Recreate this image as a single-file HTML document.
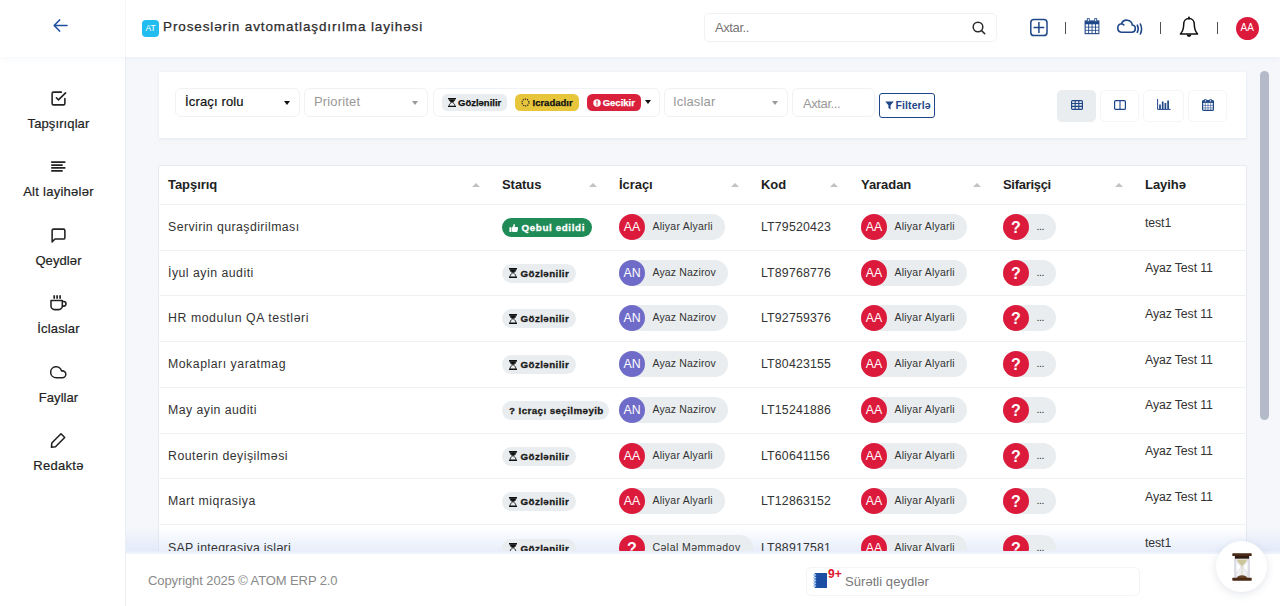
<!DOCTYPE html>
<html lang="az">
<head>
<meta charset="utf-8">
<title>Proseslərin avtomatlaşdırılma layihəsi</title>
<style>
*{box-sizing:border-box;margin:0;padding:0}
html,body{width:1280px;height:606px;overflow:hidden}
body{font-family:"Liberation Sans",sans-serif;background:#f5f7fb;color:#212529;position:relative;font-size:13px}
.abs{position:absolute}
/* sidebar */
#side{position:absolute;left:0;top:0;width:126px;height:606px;background:#fff;border-right:1px solid #ebeef3;z-index:5}
.nav{position:absolute;left:0;width:117px;text-align:center;font-size:13px;color:#222;font-weight:400;letter-spacing:.35px;-webkit-text-stroke:.2px}
.nav svg{display:block;margin:0 auto}
/* header */
#head{position:absolute;left:0;top:0;width:1280px;height:56.500px;background:#fff;box-shadow:0 1px 7px rgba(195,204,222,.2);z-index:6}
#sidehead{position:absolute;left:125px;top:0;width:1px;height:57px;background:#f6f7fa;z-index:7}
#title{position:absolute;left:163px;top:18.7px;-webkit-text-stroke:.25px;font-size:13.5px;color:#2c2c2c;letter-spacing:.88px;white-space:nowrap;z-index:7}
#at{position:absolute;left:142px;top:20px;width:17px;height:17px;border-radius:4px;background:#22bdf0;color:#fff;font-size:8.500px;line-height:17px;text-align:center;z-index:7}
#search{position:absolute;left:704px;top:13px;width:293px;height:29px;border:1px solid #f1f2f6;border-radius:5px;background:#fff;z-index:7}
#search span{position:absolute;left:10px;top:6px;font-size:13px;color:#777;letter-spacing:-.4px}
.sep{position:absolute;top:22px;width:1.3px;height:12px;background:#505050;z-index:7}
/* cards */
.card{position:absolute;background:#fff;border-radius:2px;z-index:0}
.sel{position:absolute;top:88px;height:28.5px;border:1px solid #f1f2f6;border-radius:6px;background:#fff;font-size:13px;white-space:nowrap}
.sel span{position:absolute;left:9px;top:5px;letter-spacing:.15px}
.sel i{position:absolute;right:9px;top:12px;border-left:3.5px solid transparent;border-right:3.5px solid transparent;border-top:4px solid #999}
.ph{color:#999}
.bdg{position:absolute;height:16.5px;-webkit-text-stroke:.25px;border-radius:5.5px;font-size:9.5px;font-weight:700;line-height:17px;white-space:nowrap;color:#111;padding:0 5px}
.vb{position:absolute;top:89.500px;width:39px;height:32px;border:1px solid #f4f5f8;border-radius:5px;background:#fff}
/* table */
.th{position:absolute;top:177px;font-size:13px;font-weight:700;color:#222;letter-spacing:-.05px;white-space:nowrap}
.sa{position:absolute;top:182.5px;border-left:4px solid transparent;border-right:4px solid transparent;border-bottom:4.5px solid #c2c2c2}
.row{position:absolute;left:158px;width:1089px;height:46px;border-top:1px solid #eff1f4;z-index:2}
.c{position:absolute;white-space:nowrap;font-size:12.3px;color:#333;letter-spacing:.43px;line-height:15px}
.c.k{letter-spacing:.19px}
.c.l{letter-spacing:-.1px}
.pill{position:absolute;height:26px;border-radius:13px;background:#e9edef;font-size:10.5px;color:#333;line-height:25.5px;padding-left:33.5px;padding-right:12.4px;white-space:nowrap;letter-spacing:.23px}
.pill b{position:absolute;left:0;top:0;width:26px;height:26px;border-radius:13px;color:#fff;font-weight:400;font-size:12.3px;text-align:center;line-height:27px;letter-spacing:0}
.red{background:#dc1a3c}.pur{background:#6f6bc8}
.st{position:absolute;left:344px;height:19px;border-radius:9.5px;background:#e9edef;font-size:9.8px;font-weight:700;color:#1a1a1a;line-height:19px;padding:0 7px;white-space:nowrap;letter-spacing:.4px;-webkit-text-stroke:.3px}
.st.g{background:#1f8b57;color:#fff;letter-spacing:.62px}

#main{position:absolute;left:0;top:0;width:1280px;height:606px}
.hg{display:inline-block;vertical-align:-1px;margin-right:2px}
.st .hg{height:10px;vertical-align:-1.5px;margin-right:3.5px}
.st.q{padding-right:5px;letter-spacing:.4px}
.st.g .hg{width:9.5px;margin-right:3px}
.bdg .hg{vertical-align:-1px}
#fbtn{position:absolute;left:879px;top:93px;width:56px;height:25px;border:1px solid #1f4788;border-radius:3px;background:#fff;color:#1f4788;font-size:10.5px;font-weight:700;line-height:23px;white-space:nowrap;padding-left:4.5px;letter-spacing:.1px}
#fbtn svg{display:inline-block;vertical-align:-1px;margin-right:2px}
.vb svg{position:absolute}
.row .st{top:13px}
.row .pill{top:9px}
.pill.s{padding-left:33.5px;padding-right:11.5px;line-height:24px;letter-spacing:-.4px}
.pill b.q{font-weight:700;font-size:16px}
#sb{position:absolute;left:1260px;top:71px;width:9px;height:349px;border-radius:4.5px;background:#b4bac8}
#foot{position:absolute;left:126px;top:553.5px;width:1154px;height:53px;background:#fff;z-index:3}
#fsh{position:absolute;left:126px;top:527px;width:1154px;height:26px;background:linear-gradient(to bottom,rgba(212,224,247,0),rgba(212,224,247,.6));z-index:1}
#fsh2{position:absolute;left:126px;top:551px;width:1154px;height:3px;background:linear-gradient(to bottom,#e8eefa,#f1f5fc);z-index:3}
#copy{position:absolute;left:148px;top:573px;font-size:13px;color:#8a8a8a;letter-spacing:-.1px;z-index:4;white-space:nowrap}
#qn{position:absolute;left:806px;top:567px;width:334px;height:29px;border:1px solid #f3f4f7;border-radius:5px;background:#fff;z-index:4}
#qn span{position:absolute;left:38px;top:6px;font-size:13px;color:#777;letter-spacing:.05px}
#nb{position:absolute;left:812.5px;top:573px;z-index:5}
#n9{position:absolute;left:828px;top:566.8px;font-size:12px;letter-spacing:.2px;font-weight:700;color:#e0142e;z-index:5}
#fab{position:absolute;left:1216px;top:541px;width:51px;height:51px;border-radius:26px;background:#fff;box-shadow:0 2px 9px rgba(130,140,165,.22);z-index:6}
#back{position:absolute;left:53px;top:19px;z-index:8}

.ni{position:absolute;z-index:8;fill:none;stroke:#222;stroke-width:2;stroke-linecap:round;stroke-linejoin:round}
.nav{z-index:8}
.hi{position:absolute;z-index:8}
#av{position:absolute;left:1236px;top:17px;width:22.500px;height:22.500px;border-radius:12px;background:#dc1a3c;color:#fff;font-size:10px;line-height:22.500px;text-align:center;z-index:8}
</style>
</head>
<body>
<div id="main">
<div class="card" style="left:159px;top:72px;width:1087px;height:66px;border-radius:0;box-shadow:0 1px 3px rgba(190,198,215,.3)"></div>
<div class="card" id="tcard" style="left:158px;top:164.500px;width:1089px;height:460px;border:1px solid #e6e9ef;border-radius:2px"></div>

<!-- filter bar -->
<div class="sel" style="left:175px;width:125px"><span style="color:#111;-webkit-text-stroke:.2px">İcraçı rolu</span><i style="border-top-color:#111;border-left-width:3.750px;border-right-width:3.750px;border-top-width:4.500px;top:11.500px"></i></div>
<div class="sel" style="left:304px;width:124px"><span class="ph">Prioritet</span><i></i></div>
<div class="sel" style="left:433px;width:227px"><i style="border-top-color:#111;border-left-width:3.500px;border-right-width:3.500px;border-top-width:4.500px;top:11px;right:8px"></i></div>
<div class="bdg" style="left:442px;top:94px;width:65px;padding-left:6px;background:#e9edef"><svg class="hg" viewBox="0 0 8 9" width="8" height="9" preserveAspectRatio="none"><path d="M0 0h8v1.300H0zM0 7.700h8V9H0z" fill="#111"/><path d="M1.200 1.200c0 1.900 1.300 2.600 2.200 3.300C2.500 5.200 1.200 5.900 1.200 7.800M6.800 1.200c0 1.900-1.300 2.600-2.200 3.300 0.900 0.700 2.200 1.400 2.200 3.300" fill="none" stroke="#111" stroke-width="0.900"/><path d="M1.300 1.200h5.400c0 1.700-1.400 2.500-2.700 3.300C2.700 3.700 1.300 2.900 1.300 1.200z" fill="#111"/></svg><span>Gözlənilir</span></div>
<div class="bdg" style="left:514.500px;top:94px;width:64.500px;padding-left:6.500px;background:#e8c63c"><svg class="hg" viewBox="0 0 12 12" width="9" height="9" style="margin-right:2.500px"><circle cx="6" cy="6" r="4.6" fill="none" stroke="#222" stroke-width="1.6" stroke-dasharray="1.6 1.3"/></svg><span>Icradadır</span></div>
<div class="bdg" style="left:586.700px;top:94px;width:54.300px;padding-left:6px;background:#d9213c;color:#fff"><svg class="hg" viewBox="0 0 12 12" width="8" height="8"><circle cx="6" cy="6" r="5.6" fill="#fff"/><rect x="5.100" y="2.400" width="1.800" height="4.600" fill="#d9213c"/><rect x="5.100" y="8" width="1.800" height="1.800" fill="#d9213c"/></svg><span>Gecikir</span></div>
<div class="sel" style="left:664px;width:124px"><span class="ph" style="left:8px">Iclaslar</span><i></i></div>
<div class="sel" style="left:792px;width:83px;height:29px"><span class="ph" style="left:10px;top:6.500px;letter-spacing:-.4px">Axtar...</span></div>
<div id="fbtn"><svg viewBox="0 0 10 10" width="9" height="9"><path d="M0.300 0.500h9.400L6.200 4.800v4.600L3.800 7.800V4.800z" fill="#1f4788"/></svg><span>Filterlə</span></div>

<div class="vb" style="left:1057px;background:#e9edef;border-color:#e9edef"><svg viewBox="0 0 12 10" width="12" height="10" style="left:13px;top:9px"><rect x="0.600" y="0.600" width="10.800" height="8.800" rx="1" fill="none" stroke="#1f4788" stroke-width="1.200"/><path d="M0.600 3.500h10.800M0.600 6.400h10.800M4.200 0.600v8.800M7.800 0.600v8.800" stroke="#1f4788" stroke-width="1.100" fill="none"/></svg></div>
<div class="vb" style="left:1100px"><svg viewBox="0 0 12 10" width="12" height="10" style="left:13px;top:9px"><rect x="0.600" y="0.600" width="10.800" height="8.800" rx="1" fill="none" stroke="#1f4788" stroke-width="1.200"/><path d="M6 0.600v8.800" stroke="#1f4788" stroke-width="1.100"/></svg></div>
<div class="vb" style="left:1143px;width:41px"><svg viewBox="0 0 14 11" width="14" height="11" style="left:13px;top:8px"><path d="M0.600 0v10.400h13" stroke="#1f4788" stroke-width="1" fill="none"/><path d="M3 5.500v4.500M5.700 2.500v7.500M8.400 4v6M11.100 1.500v8.500" stroke="#1f4788" stroke-width="1.700" fill="none"/></svg></div>
<div class="vb" style="left:1188px"><svg viewBox="0 0 12 12" width="12" height="12" style="left:13px;top:8px"><rect x="0.600" y="1.600" width="10.800" height="9.800" rx="1" fill="none" stroke="#1f4788" stroke-width="1.200"/><rect x="0.600" y="1.600" width="10.800" height="2.300" fill="#1f4788"/><path d="M2.500 0.400h1.700v2.600H2.500zM7.800 0.400h1.700v2.600H7.800z" fill="#fff" stroke="#1f4788" stroke-width="0.800"/><path d="M0.600 6.400h10.800M0.600 8.900h10.800M3.300 4v7.400M6 4v7.400M8.700 4v7.400" stroke="#1f4788" stroke-width="0.550" fill="none"/></svg></div>

<!-- table header -->
<div class="th" style="left:168px">Tapşırıq</div><i class="sa" style="left:472px"></i>
<div class="th" style="left:502px">Status</div><i class="sa" style="left:589px"></i>
<div class="th" style="left:619px">İcraçı</div><i class="sa" style="left:731px"></i>
<div class="th" style="left:761px">Kod</div><i class="sa" style="left:830px"></i>
<div class="th" style="left:861px">Yaradan</div><i class="sa" style="left:973px"></i>
<div class="th" style="left:1003px;letter-spacing:-.3px">Sifarişçi</div><i class="sa" style="left:1115px"></i>
<div class="th" style="left:1145px">Layihə</div>
<div class="row" style="top:204.0px">
<div class="c" style="left:10px;top:15px">Servirin quraşdirilması</div>
<div class="st g"><svg class="hg" viewBox="0 0 12 12" width="11" height="11"><path d="M0.500 5.200h2.500v5.800H0.500zM3.600 5.400c1.400-1 2-2.400 2.200-4.200 0.100-0.700 1.700-0.600 1.700 1.100 0 0.800-0.200 1.600-0.500 2.300h3.300c1.100 0 1.500 1.200 0.800 1.800 0.500 0.500 0.400 1.300-0.200 1.700 0.400 0.500 0.200 1.200-0.300 1.500 0.300 0.700-0.200 1.400-1 1.400H6.500c-1 0-2-0.300-2.900-0.700z" fill="#fff"/></svg><span>Qebul edildi</span></div>
<div class="pill" style="left:461px"><b class="red">AA</b>Aliyar Alyarli</div>
<div class="c k" style="left:603px;top:15px">LT79520423</div>
<div class="pill" style="left:703px"><b class="red">AA</b>Aliyar Alyarli</div>
<div class="pill s" style="left:845px"><b class="red q">?</b>...</div>
<div class="c l" style="left:987px;top:10.6px">test1</div>
</div>
<div class="row" style="top:249.7px">
<div class="c" style="left:10px;top:15px;letter-spacing:0.49px">İyul ayin auditi</div>
<div class="st"><svg class="hg" viewBox="0 0 8 9" width="8" height="9" preserveAspectRatio="none"><path d="M0 0h8v1.300H0zM0 7.700h8V9H0z" fill="#111"/><path d="M1.200 1.200c0 1.900 1.300 2.600 2.200 3.300C2.500 5.200 1.200 5.900 1.200 7.800M6.800 1.200c0 1.900-1.300 2.600-2.200 3.300 0.900 0.700 2.200 1.400 2.200 3.300" fill="none" stroke="#111" stroke-width="0.900"/><path d="M1.300 1.200h5.400c0 1.700-1.400 2.500-2.700 3.300C2.700 3.700 1.300 2.900 1.300 1.200z" fill="#111"/></svg><span>Gözlənilir</span></div>
<div class="pill" style="left:461px"><b class="pur">AN</b><span style="letter-spacing:.15px">Ayaz Nazirov</span></div>
<div class="c k" style="left:603px;top:15px">LT89768776</div>
<div class="pill" style="left:703px"><b class="red">AA</b>Aliyar Alyarli</div>
<div class="pill s" style="left:845px"><b class="red q">?</b>...</div>
<div class="c l" style="left:987px;top:10.6px">Ayaz Test 11</div>
</div>
<div class="row" style="top:295.4px">
<div class="c" style="left:10px;top:15px;letter-spacing:0.57px">HR modulun QA testləri</div>
<div class="st"><svg class="hg" viewBox="0 0 8 9" width="8" height="9" preserveAspectRatio="none"><path d="M0 0h8v1.300H0zM0 7.700h8V9H0z" fill="#111"/><path d="M1.200 1.200c0 1.900 1.300 2.600 2.200 3.300C2.500 5.200 1.200 5.900 1.200 7.800M6.800 1.200c0 1.900-1.300 2.600-2.200 3.300 0.900 0.700 2.200 1.400 2.200 3.300" fill="none" stroke="#111" stroke-width="0.900"/><path d="M1.300 1.200h5.400c0 1.700-1.400 2.500-2.700 3.300C2.700 3.700 1.300 2.900 1.300 1.200z" fill="#111"/></svg><span>Gözlənilir</span></div>
<div class="pill" style="left:461px"><b class="pur">AN</b><span style="letter-spacing:.15px">Ayaz Nazirov</span></div>
<div class="c k" style="left:603px;top:15px">LT92759376</div>
<div class="pill" style="left:703px"><b class="red">AA</b>Aliyar Alyarli</div>
<div class="pill s" style="left:845px"><b class="red q">?</b>...</div>
<div class="c l" style="left:987px;top:10.6px">Ayaz Test 11</div>
</div>
<div class="row" style="top:341.1px">
<div class="c" style="left:10px;top:15px;letter-spacing:0.52px">Mokapları yaratmag</div>
<div class="st"><svg class="hg" viewBox="0 0 8 9" width="8" height="9" preserveAspectRatio="none"><path d="M0 0h8v1.300H0zM0 7.700h8V9H0z" fill="#111"/><path d="M1.200 1.200c0 1.900 1.300 2.600 2.200 3.300C2.500 5.200 1.200 5.900 1.200 7.800M6.800 1.200c0 1.900-1.300 2.600-2.200 3.300 0.900 0.700 2.200 1.400 2.200 3.300" fill="none" stroke="#111" stroke-width="0.900"/><path d="M1.300 1.200h5.400c0 1.700-1.400 2.500-2.700 3.300C2.700 3.700 1.300 2.900 1.300 1.200z" fill="#111"/></svg><span>Gözlənilir</span></div>
<div class="pill" style="left:461px"><b class="pur">AN</b><span style="letter-spacing:.15px">Ayaz Nazirov</span></div>
<div class="c k" style="left:603px;top:15px">LT80423155</div>
<div class="pill" style="left:703px"><b class="red">AA</b>Aliyar Alyarli</div>
<div class="pill s" style="left:845px"><b class="red q">?</b>...</div>
<div class="c l" style="left:987px;top:10.6px">Ayaz Test 11</div>
</div>
<div class="row" style="top:386.8px">
<div class="c" style="left:10px;top:15px;letter-spacing:0.46px">May ayin auditi</div>
<div class="st q"><span>? Icraçı seçilməyib</span></div>
<div class="pill" style="left:461px"><b class="pur">AN</b><span style="letter-spacing:.15px">Ayaz Nazirov</span></div>
<div class="c k" style="left:603px;top:15px">LT15241886</div>
<div class="pill" style="left:703px"><b class="red">AA</b>Aliyar Alyarli</div>
<div class="pill s" style="left:845px"><b class="red q">?</b>...</div>
<div class="c l" style="left:987px;top:10.6px">Ayaz Test 11</div>
</div>
<div class="row" style="top:432.5px">
<div class="c" style="left:10px;top:15px;letter-spacing:0.5px">Routerin deyişilməsi</div>
<div class="st"><svg class="hg" viewBox="0 0 8 9" width="8" height="9" preserveAspectRatio="none"><path d="M0 0h8v1.300H0zM0 7.700h8V9H0z" fill="#111"/><path d="M1.200 1.200c0 1.900 1.300 2.600 2.200 3.300C2.500 5.200 1.200 5.900 1.200 7.800M6.800 1.200c0 1.900-1.300 2.600-2.200 3.300 0.900 0.700 2.200 1.400 2.200 3.300" fill="none" stroke="#111" stroke-width="0.900"/><path d="M1.300 1.200h5.400c0 1.700-1.400 2.500-2.700 3.300C2.700 3.700 1.300 2.900 1.300 1.200z" fill="#111"/></svg><span>Gözlənilir</span></div>
<div class="pill" style="left:461px"><b class="red">AA</b>Aliyar Alyarli</div>
<div class="c k" style="left:603px;top:15px">LT60641156</div>
<div class="pill" style="left:703px"><b class="red">AA</b>Aliyar Alyarli</div>
<div class="pill s" style="left:845px"><b class="red q">?</b>...</div>
<div class="c l" style="left:987px;top:10.6px">Ayaz Test 11</div>
</div>
<div class="row" style="top:478.2px">
<div class="c" style="left:10px;top:15px;letter-spacing:0.51px">Mart miqrasiya</div>
<div class="st"><svg class="hg" viewBox="0 0 8 9" width="8" height="9" preserveAspectRatio="none"><path d="M0 0h8v1.300H0zM0 7.700h8V9H0z" fill="#111"/><path d="M1.200 1.200c0 1.900 1.300 2.600 2.200 3.300C2.500 5.200 1.200 5.900 1.200 7.800M6.800 1.200c0 1.900-1.300 2.600-2.200 3.300 0.900 0.700 2.200 1.400 2.200 3.300" fill="none" stroke="#111" stroke-width="0.900"/><path d="M1.300 1.200h5.400c0 1.700-1.400 2.500-2.700 3.300C2.700 3.700 1.300 2.900 1.300 1.200z" fill="#111"/></svg><span>Gözlənilir</span></div>
<div class="pill" style="left:461px"><b class="red">AA</b>Aliyar Alyarli</div>
<div class="c k" style="left:603px;top:15px">LT12863152</div>
<div class="pill" style="left:703px"><b class="red">AA</b>Aliyar Alyarli</div>
<div class="pill s" style="left:845px"><b class="red q">?</b>...</div>
<div class="c l" style="left:987px;top:10.6px">Ayaz Test 11</div>
</div>
<div class="row" style="top:523.9px;height:1px"></div>
<div class="row" style="top:525.9px;border-top:0">
<div class="c" style="left:10px;top:15px;letter-spacing:0.32px">SAP inteqrasiya işləri</div>
<div class="st"><svg class="hg" viewBox="0 0 8 9" width="8" height="9" preserveAspectRatio="none"><path d="M0 0h8v1.300H0zM0 7.700h8V9H0z" fill="#111"/><path d="M1.200 1.200c0 1.900 1.300 2.600 2.200 3.300C2.500 5.200 1.200 5.900 1.200 7.800M6.800 1.200c0 1.900-1.300 2.600-2.200 3.300 0.900 0.700 2.200 1.400 2.200 3.300" fill="none" stroke="#111" stroke-width="0.900"/><path d="M1.300 1.200h5.400c0 1.700-1.400 2.500-2.700 3.300C2.700 3.700 1.300 2.900 1.300 1.200z" fill="#111"/></svg><span>Gözlənilir</span></div>
<div class="pill" style="left:461px"><b class="red q">?</b><span style="letter-spacing:.46px">Cəlal Məmmədov</span></div>
<div class="c k" style="left:603px;top:15px">LT88917581</div>
<div class="pill" style="left:703px"><b class="red">AA</b>Aliyar Alyarli</div>
<div class="pill s" style="left:845px"><b class="red q">?</b>...</div>
<div class="c l" style="left:987px;top:10.6px">test1</div>
</div>
<div id="sb"></div>
</div>

<!-- footer -->
<div id="fsh"></div><div id="fsh2"></div><div id="foot"></div>
<div id="copy">Copyright 2025 © ATOM ERP 2.0</div>
<div id="qn"><span>Sürətli qeydlər</span></div>
<svg id="nb" viewBox="0 0 14 15" width="14" height="15"><rect x="2" y="0" width="12" height="15" fill="#1c4fa3"/><g fill="#fff" stroke="#4f86d6" stroke-width="0.700"><circle cx="1.900" cy="2" r="1.100"/><circle cx="1.900" cy="4.750" r="1.100"/><circle cx="1.900" cy="7.500" r="1.100"/><circle cx="1.900" cy="10.250" r="1.100"/><circle cx="1.900" cy="13" r="1.100"/></g></svg><div id="n9">9+</div>
<div id="fab"><svg viewBox="0 0 20 28" width="20" height="28" style="position:absolute;left:15.500px;top:11.500px"><rect x="2" y="3" width="2.400" height="22" fill="#dcdce6"/><rect x="15.600" y="3" width="2.400" height="22" fill="#dcdce6"/><path d="M4.400 3h11.200v4c0 3-3.600 4.600-4.600 7 1 2.400 4.600 4 4.600 7v4H4.400v-4c0-3 3.600-4.600 4.600-7-1-2.400-4.600-4-4.600-7z" fill="#f1f1f5" stroke="#cdcdd8" stroke-width="0.500"/><path d="M5.200 6.500h9.600c0 3-3.300 4.200-4.800 7.300-1.500-3.100-4.800-4.300-4.800-7.300z" fill="#cbc59a"/><path d="M9.700 13h0.600v9h-0.600z" fill="#cbc59a"/><path d="M4.800 25c0.400-2 2.600-2.800 5.200-2.800s4.800 0.800 5.200 2.800z" fill="#6a4429"/><rect x="3" y="2.500" width="14" height="3.200" fill="#2e1a10"/><rect x="0.300" y="0.300" width="19.400" height="2.700" rx="0.600" fill="#4a2a16"/><rect x="0.300" y="24.800" width="19.400" height="2.900" rx="0.600" fill="#4a2a16"/></svg></div>

<div id="side"></div>
<div id="head"></div>
<div id="sidehead"></div>
<div id="title">Proseslərin avtomatlaşdırılma layihəsi</div>
<div id="at">AT</div>
<div id="search"><span>Axtar..</span><svg viewBox="0 0 14 14" width="14" height="14" style="position:absolute;left:267px;top:7px"><circle cx="6" cy="6" r="4.800" fill="none" stroke="#2a2a2a" stroke-width="1.500"/><path d="M9.500 9.500l3.200 3.200" stroke="#2a2a2a" stroke-width="1.600" stroke-linecap="round"/></svg></div>
<svg id="back" viewBox="0 0 16 14" width="15" height="13"><path d="M7 1L1.200 7 7 13M1.500 7h13.500" fill="none" stroke="#1f4fa0" stroke-width="1.700" stroke-linecap="round" stroke-linejoin="round"/></svg>

<!-- nav -->
<svg class="ni" style="left:49.800px;top:89.800px;stroke-width:2.200" width="17" height="17" viewBox="0 0 24 24"><polyline points="9 11 12 14 22 4"/><path d="M21 12v7a2 2 0 0 1-2 2H5a2 2 0 0 1-2-2V5a2 2 0 0 1 2-2h11"/></svg>
<div class="nav" style="top:116px;letter-spacing:0.1px">Tapşırıqlar</div>
<svg class="ni" style="left:48px;top:156px" width="20" height="20" viewBox="0 0 20 20"><path d="M3.200 6.200h14.200M3.200 9.100h11.500M3.200 11.900h14.200M3.200 14.800h11.500" stroke-width="1.700" stroke-linecap="butt"/></svg>
<div class="nav" style="top:184px;letter-spacing:0.27px">Alt layihələr</div>
<svg class="ni" style="left:49.800px;top:227.100px;stroke-width:2.200" width="17" height="17" viewBox="0 0 24 24"><path d="M21 15a2 2 0 0 1-2 2H7l-4 4V5a2 2 0 0 1 2-2h14a2 2 0 0 1 2 2z"/></svg>
<div class="nav" style="top:253px;letter-spacing:0.1px">Qeydlər</div>
<svg class="ni" style="left:48px;top:293px" width="20" height="20" viewBox="0 0 20 20"><path d="M3 7.500h11.300v5.600a3.500 3.500 0 0 1-3.500 3.500H6.500A3.500 3.500 0 0 1 3 13.100zM14.300 8.500h1.400a2.300 2.300 0 0 1 0 4.600h-1.400" stroke-width="1.550"/><path d="M6.200 2.200v3.600M9.100 2.200v3.600M12.100 2.200v3.600" stroke-width="1.700" stroke-linecap="butt"/></svg>
<div class="nav" style="top:321px;letter-spacing:0.15px">İclaslar</div>
<svg class="ni" style="left:50.050px;top:363.900px;stroke-width:2.200" width="16.500" height="16.500" viewBox="0 0 24 24"><path d="M18 10h-1.260A8 8 0 1 0 9 20h9a5 5 0 0 0 0-10z"/></svg>
<div class="nav" style="top:390px;letter-spacing:0.05px">Fayllar</div>
<svg class="ni" style="left:48px;top:430px" width="20" height="20" viewBox="0 0 20 20"><path d="M13 3.800l3.700 3.700-9.200 9.200-4 0.600 0.300-4.300z" stroke-width="1.600"/></svg>
<div class="nav" style="top:458px;letter-spacing:0.28px">Redaktə</div>

<!-- header icons -->
<svg class="hi" style="left:1029px;top:17px" width="20" height="20" viewBox="0 0 20 20"><rect x="1.800" y="2.400" width="16.200" height="16.200" rx="3.200" fill="none" stroke="#1f4788" stroke-width="1.500"/><path d="M4.500 10.500h10.800M9.900 5.100v10.800" stroke="#1f4788" stroke-width="1.500" fill="none"/></svg>
<i class="sep" style="left:1065px"></i>
<svg class="hi" style="left:1084px;top:18px" width="16" height="17" viewBox="0 0 16 17"><path d="M0.600 2.400h14.800v13.800H0.600z" fill="#1f4788"/><path d="M3.300 0.300h2v3.400h-2zM10.700 0.300h2v3.400h-2z" fill="#fff" stroke="#1f4788" stroke-width="0.900"/><g fill="#fff"><rect x="1.700" y="6.300" width="2.500" height="2.400"/><rect x="5.100" y="6.300" width="2.500" height="2.400"/><rect x="8.500" y="6.300" width="2.500" height="2.400"/><rect x="11.900" y="6.300" width="2.500" height="2.400"/><rect x="1.700" y="9.500" width="2.500" height="2.400"/><rect x="5.100" y="9.500" width="2.500" height="2.400"/><rect x="8.500" y="9.500" width="2.500" height="2.400"/><rect x="11.900" y="9.500" width="2.500" height="2.400"/><rect x="1.700" y="12.700" width="2.500" height="2.400"/><rect x="5.100" y="12.700" width="2.500" height="2.400"/><rect x="8.500" y="12.700" width="2.500" height="2.400"/><rect x="11.900" y="12.700" width="2.500" height="2.400"/></g></svg>
<svg class="hi" style="left:1115px;top:18px" width="29" height="18" viewBox="0 0 29 18"><path d="M6.300 14.200h10.500a3.600 3.600 0 0 0 0.500-7.150A5.600 5.600 0 0 0 6.500 5.800 4.250 4.250 0 0 0 6.300 14.200zM6.500 5.800a4 4 0 0 1 2.300 1.100" fill="none" stroke="#1f4788" stroke-width="1.600" stroke-linecap="round" stroke-linejoin="round"/><path d="M22.300 7.200a8 8 0 0 1 0 7.200M25.300 6a11 11 0 0 1 0 10" fill="none" stroke="#1f4788" stroke-width="1.600" stroke-linecap="round"/></svg>
<i class="sep" style="left:1160px"></i>
<svg class="hi" style="left:1178px;top:16px" width="22" height="23" viewBox="0 0 22 23"><path d="M11 2.600c-3.400 0-5.300 2.600-5.300 5.800 0 4.400-1.300 7.300-3.300 9.500h17.200c-2-2.200-3.300-5.100-3.300-9.500 0-3.200-1.900-5.800-5.300-5.800z" fill="none" stroke="#111" stroke-width="1.500" stroke-linejoin="round"/><path d="M11 1.300v1.400" stroke="#111" stroke-width="1.800" stroke-linecap="round"/><path d="M8.600 18.500a2.400 2.400 0 0 0 4.800 0z" fill="#111"/></svg>
<i class="sep" style="left:1217px"></i>
<div id="av">AA</div>
</body>
</html>
